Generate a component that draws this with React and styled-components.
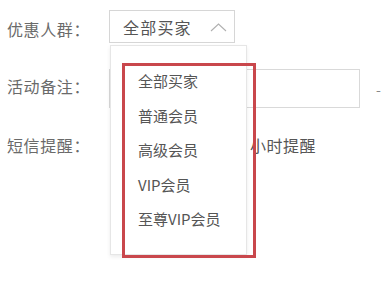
import React from "react";
import styled, { createGlobalStyle } from "styled-components";

const Global = createGlobalStyle`
  body {
    margin: 0;
    background: #fff;
    font-family: "Noto Sans CJK SC", "Liberation Sans", sans-serif;
  }
`;

const Form = styled.div`
  position: relative;
  width: 381px;
  height: 281px;
  padding: 10px 0 0 7px;
  box-sizing: border-box;
  overflow: hidden;
`;

const Row = styled.div`
  display: flex;
  align-items: center;
  height: ${(p) => p.$h}px;
  margin-bottom: ${(p) => p.$mb}px;
`;

const Label = styled.div`
  width: 102px;
  flex: none;
  font-size: 16px;
  letter-spacing: 0.6px;
  color: #6a6a6a;
  margin-top: ${(p) => p.$down || 0}px;
  margin-bottom: ${(p) => p.$up || 0}px;
`;

const SelectWrap = styled.div`
  position: relative;
  height: 100%;
`;

const SelectBox = styled.div`
  width: 126px;
  height: 100%;
  box-sizing: border-box;
  border: 1px solid #d6d6d6;
  display: flex;
  align-items: center;
  justify-content: space-between;
  padding: 0 7px 0 13px;
  font-size: 16px;
  letter-spacing: 1.2px;
  color: #555;
`;

const Panel = styled.ul`
  position: absolute;
  left: 1px;
  top: 35px;
  width: 137px;
  margin: 0;
  padding: 18px 0 17px 27px;
  box-sizing: border-box;
  list-style: none;
  background: #fff;
  border: 1px solid #e6e6e6;
  box-shadow: 0 2px 4px rgba(0, 0, 0, 0.08);
  z-index: 2;
`;

const Option = styled.li`
  height: 34.5px;
  line-height: 34.5px;
  font-size: 15px;
  color: #555;
  white-space: nowrap;
`;

const Input = styled.div`
  width: 251px;
  height: 100%;
  box-sizing: border-box;
  border: 1px solid #d9d9d9;
`;

const Note = styled.span`
  margin-left: 16px;
  font-size: 14px;
  color: #888;
`;

const Hint = styled.span`
  margin-left: 141px;
  font-size: 16px;
  letter-spacing: 0.5px;
  color: #555;
`;

const Highlight = styled.div`
  position: absolute;
  left: 122px;
  top: 63px;
  width: 134px;
  height: 195px;
  box-sizing: border-box;
  border: 3px solid #c9474c;
  z-index: 3;
  pointer-events: none;
`;

const Chevron = () => (
  <svg width="17" height="9" viewBox="0 0 17 9" style={{ marginTop: 2 }}>
    <polyline points="1,8 8.5,1 16,8" fill="none" stroke="#b0b0b0" strokeWidth="1.1" />
  </svg>
);

const options = ["全部买家", "普通会员", "高级会员", "VIP会员", "至尊VIP会员"];

export default function App() {
  return (
    <>
      <Global />
      <Form>
        <Row $h={33} $mb={26}>
          <Label $down={4}>优惠人群：</Label>
          <SelectWrap>
            <SelectBox>
              <span>全部买家</span>
              <Chevron />
            </SelectBox>
            <Panel>
              {options.map((o) => (
                <Option key={o}>{o}</Option>
              ))}
            </Panel>
          </SelectWrap>
        </Row>
        <Row $h={39} $mb={20}>
          <Label $up={6}>活动备注：</Label>
          <Input />
          <Note>-</Note>
        </Row>
        <Row $h={33} $mb={0}>
          <Label>短信提醒：</Label>
          <Hint>小时提醒</Hint>
        </Row>
        <Highlight />
      </Form>
    </>
  );
}
